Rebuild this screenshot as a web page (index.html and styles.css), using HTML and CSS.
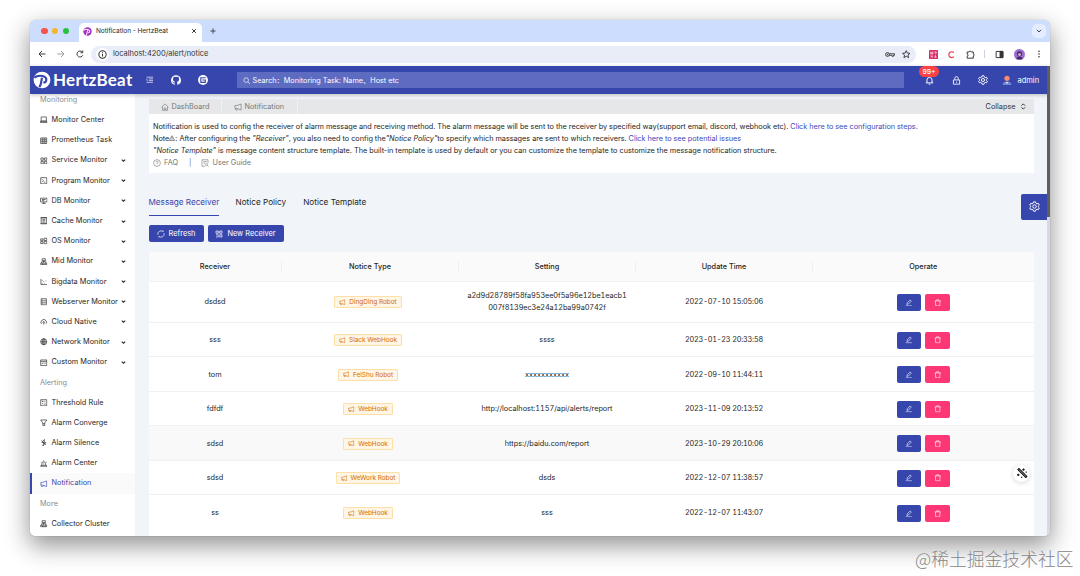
FILE: index.html
```html
<!DOCTYPE html>
<html lang="en">
<head>
<meta charset="utf-8">
<title>Notification - HertzBeat</title>
<link rel="stylesheet" href="styles.css">
</head>
<body>
<svg class="defs" xmlns="http://www.w3.org/2000/svg">
  <symbol id="horn" viewBox="0 0 16 16"><path d="M14.2 2v12L6 10.9H1.8V5.1H6zM3 11v1.2a2 2 0 0 0 4 .2v-1"/></symbol>
  <symbol id="laptop" viewBox="0 0 16 16"><path d="M2.5 2h11v9h-11zM1 14h14V11H1z"/></symbol>
  <symbol id="grid" viewBox="0 0 16 16"><path d="M1.5 2h13v12h-13zM1.5 6h13M1.5 10h13M6 2v12M10.3 2v12"/></symbol>
  <symbol id="apps" viewBox="0 0 16 16"><path d="M2 2h5v5H2zM9.5 2h5v5h-5zM2 9.5h5v5H2zM9.5 9.5h5v5h-5z"/></symbol>
  <symbol id="code" viewBox="0 0 16 16"><path d="M1.5 1.5h13v13h-13zM4.5 5l3 3-3 3M8.5 11h3"/></symbol>
  <symbol id="db" viewBox="0 0 16 16"><path d="M1 2.5h14v8H1zM4 5.3h8M4 7.7h5M8 10.5v3M4 13.7h8"/></symbol>
  <symbol id="cache" viewBox="0 0 16 16"><path d="M2.5 1.5h11v13h-11zM1 1.5h14M1 14.5h14M5 5h6M5 8h6M5 11h6"/></symbol>
  <symbol id="os" viewBox="0 0 16 16"><path d="M1.5 4h5v4h-5zM1.5 10h5v4h-5zM9 2.5h5.5v5H9zM9 9.5h5.5v5H9z"/></symbol>
  <symbol id="cluster" viewBox="0 0 16 16"><path d="M4.5 1.5h7v4h-7zM8 5.5V14M3.5 11V8h9v3M1.5 11h4v3.5h-4zM10.5 11h4v3.5h-4zM4.5 14.5h7"/></symbol>
  <symbol id="chart" viewBox="0 0 16 16"><path d="M2 2v12h13M5 10.5v1.2M7.5 7v1.2M10 10v1.2M12.5 5.5v1.2M5 5v1.2"/></symbol>
  <symbol id="server" viewBox="0 0 16 16"><path d="M2.5 1.5h11v13h-11zM2.5 6h11M2.5 10.3h11M5 3.8h1.2M5 8.2h1.2M5 12.4h1.2"/></symbol>
  <symbol id="cloud" viewBox="0 0 16 16"><path d="M4 12a3 3 0 0 1-.3-5.8 4.5 4.5 0 0 1 8.6 0A3 3 0 0 1 12 12M8 14V7.5M5.5 10 8 7.5l2.5 2.5"/></symbol>
  <symbol id="globe" viewBox="0 0 16 16"><circle cx="8" cy="8" r="6.5"/><path d="M1.5 8h13M8 1.5v13"/><ellipse cx="8" cy="8" rx="3" ry="6.5"/></symbol>
  <symbol id="custom" viewBox="0 0 16 16"><path d="M1.5 2h13v12h-13zM1.5 5h13M5 8v3M8 7.5v2M11 7.5v3"/></symbol>
  <symbol id="calc" viewBox="0 0 16 16"><path d="M1.5 1.5h13v13h-13zM4.5 5h2.5M4.5 10h2.5M9.5 5h2M9.5 9h2M9.5 11.5h2M5.7 3.8v2.5"/></symbol>
  <symbol id="filter" viewBox="0 0 16 16"><path d="M1.5 2h13L10 8.5V14H6V8.5zM6 10h4"/></symbol>
  <symbol id="mute" viewBox="0 0 16 16"><path d="M9.500 1 4 7.500h4L6 15l6.500-7.500H9zM3 3l10 10"/></symbol>
  <symbol id="alert" viewBox="0 0 16 16"><path d="M4 11.5V8a4 4 0 0 1 8 0v3.5M2 11.5h12v3H2zM8 1v2M2 4l1.2 1M14 4l-1.2 1M7 8.5h2"/></symbol>
  <symbol id="down" viewBox="0 0 16 16"><path d="M2.5 5 8 10.5 13.5 5"/></symbol>
  <symbol id="home" viewBox="0 0 16 16"><path d="M1 8.5 8 1.7l7 6.8M3 7.5v7h10v-7M6.5 14.5V10h3v4.5"/></symbol>
  <symbol id="help" viewBox="0 0 16 16"><circle cx="8" cy="8" r="6.8"/><path d="M5.8 6.5a2.2 2.2 0 1 1 2.2 2.3v1M8 11.3v1.2"/></symbol>
  <symbol id="guide" viewBox="0 0 16 16"><path d="M8 14.5H2v-13h12V8M4.5 5h7M4.5 8H8"/><circle cx="11" cy="11" r="2.3"/><path d="m12.7 12.7 2.3 2.3"/></symbol>
  <symbol id="sync" viewBox="0 0 16 16"><path d="M1.800 9.500A6.300 6.300 0 0 1 12 3.200M14.200 6.500A6.300 6.300 0 0 1 4 12.800M12.300 1v2.500M3.700 15v-2.500"/></symbol>
  <symbol id="addapps" viewBox="0 0 16 16"><path d="M2 2h4.5v4.5H2zM9.5 2H14v4.5H9.5zM9.5 9.5H14V14H9.500zM2 9.500h4.500V14H2M6.500 4.200h3"/></symbol>
  <symbol id="pen" viewBox="0 0 16 16"><path d="M1.5 14.5h13M4 11.5l.7-3.300L11 2l2.500 2.500-6.300 6.300z"/></symbol>
  <symbol id="trash" viewBox="0 0 16 16"><path d="M1.5 4h13M5.5 4V1.700h5V4M3 4l.7 10.500h8.600L13 4"/></symbol>
  <symbol id="gear" viewBox="0 0 16 16"><path d="m6.500 1.200-.5 2-1.600.9-2-.6L1 6l1.500 1.400v1.200L1 10l1.400 2.500 2-.6 1.600.9.500 2h3l.5-2 1.600-.9 2 .6L15 10l-1.500-1.400V7.400L15 6l-1.400-2.500-2 .6-1.600-.9-.5-2z"/><circle cx="8" cy="8" r="2.500"/></symbol>
  <symbol id="lock" viewBox="0 0 16 16"><path d="M2.500 7h11v7.500h-11zM5 7V4a3 3 0 0 1 6 0v3M8 10v2"/></symbol>
  <symbol id="bell" viewBox="0 0 16 16"><path d="M3.500 12V7a4.500 4.500 0 0 1 9 0v5M1.500 12.200h13M6.500 14.500h3"/></symbol>
  <symbol id="search" viewBox="0 0 16 16"><circle cx="6.700" cy="6.700" r="5"/><path d="m10.500 10.500 4.500 4.500"/></symbol>
  <symbol id="brand" viewBox="0 0 20 20"><circle cx="10" cy="10" r="9.300" fill="currentColor" stroke="none"/><path class="cut" d="M1.500 7.500C5 4.800 10 5 13 6.500c3 2 2 6.500-1.500 6.200M10 7.500c-1 3 0 6-3 10.500"/></symbol>
</svg>

<div class="window">
  <div class="tabstrip">
    <div class="lights"><i class="red"></i><i class="amber"></i><i class="green"></i></div>
    <div class="tab"><svg class="fav"><use href="#brand"/></svg><span class="tab-title">Notification - HertzBeat</span>
      <svg class="close" viewBox="0 0 16 16"><path d="m3 3 10 10M13 3 3 13"/></svg></div>
    <svg class="plus" viewBox="0 0 16 16"><path d="M8 1v14M1 8h14"/></svg>
    <div class="tabmenu"><svg viewBox="0 0 16 16"><use href="#down"/></svg></div>
  </div>

  <div class="toolbar">
    <svg viewBox="0 0 16 16"><path d="M15 8H2M8 2 2 8l6 6"/></svg>
    <svg class="faded" viewBox="0 0 16 16"><path d="M1 8h13M8 2l6 6-6 6"/></svg>
    <svg viewBox="0 0 16 16"><path d="M13.500 10.500A6 6 0 1 1 12.500 4M13.500 1v4.500H9"/></svg>
    <div class="address">
      <span class="info"><svg viewBox="0 0 16 16"><circle cx="8" cy="8" r="6.500"/><path d="M8 7v4.500M8 4.200v1.500"/></svg></span>
      <span class="url">localhost:4200/alert/notice</span>
      <svg class="key" viewBox="0 0 20 12"><circle cx="5" cy="6" r="3.800"/><circle cx="5" cy="6" r=".8"/><path d="M8.500 4.500H19v3h-2v2h-3v-2H8.500"/></svg>
      <svg class="star" viewBox="0 0 16 16"><path d="m8 1.200 2 4.600 5 .4-3.800 3.300 1.200 4.900L8 11.800l-4.400 2.600 1.200-4.900L1 6.200l5-.4z"/></svg>
    </div>
    <div class="extensions">
      <svg class="translate" viewBox="0 0 16 16"><rect width="16" height="16" rx="1" fill="#dc2f6b" stroke="none"/><path d="M3 4h4v3H3zM9.500 3.500h3.500l-1.500 4M3 10l4 3M7 10l-4 3M9.500 12.500h4M11.500 9v4"/></svg>
      <svg class="letter" viewBox="0 0 16 16"><path d="M13 4.500A5.500 5.500 0 1 0 13 12"/></svg>
      <svg viewBox="0 0 16 16"><path d="M2 3.500h3.500a1.800 1.500 0 0 1 3.600 0H13V7a1.500 1.800 0 0 1 0 3.600v3.900H2V11a1.800 1.800 0 0 0 0-3.600z"/></svg>
      <i class="divider"></i>
      <svg class="panel" viewBox="0 0 16 16"><path d="M2 2.500h12v11H2z"/><path d="M9 2.500h5v11H9z" fill="#333"/></svg>
      <svg class="profile" viewBox="0 0 16 16"><circle cx="8" cy="8" r="8" fill="#a06bcf" stroke="none"/><circle cx="8" cy="7" r="3.800" fill="#49306e" stroke="none"/><circle cx="8" cy="8" r="2" fill="#d8bfe0" stroke="none"/><path d="M4 15v-2.500l4-1.500 4 1.500V15z" fill="#3c2a5c" stroke="none"/></svg>
      <svg class="dots" viewBox="0 0 16 16"><circle cx="8" cy="2.500" r="1.600"/><circle cx="8" cy="8" r="1.600"/><circle cx="8" cy="13.500" r="1.600"/></svg>
    </div>
  </div>

  <div class="app">
    <header class="header">
      <svg class="logo"><use href="#brand"/></svg><span class="brand">HertzBeat</span>
      <svg class="fold" viewBox="0 0 16 16"><path d="M1 2.500h14M6 6.200h9M6 9.800h9M1 13.500h14M3.500 6 1 8l2.500 2"/></svg>
      <svg class="github" viewBox="0 0 16 16"><path fill="#fff" stroke="none" d="M8 .2a8 8 0 0 0-2.600 15.500c.4.100.6-.2.600-.5v-2c-2.500.5-3-.9-3.300-1.500-.2-.4-.6-.9-1-1.200.6-.4 1.300 0 1.700.6.700 1.100 1.600 1.200 2.600.8.100-.5.300-.9.600-1.200-2.300-.4-3.400-1.700-3.400-4 0-1 .3-1.700.8-2.300-.2-.6-.2-1.400.1-2.200.8 0 1.600.4 2.300.9a8 8 0 0 1 3.400 0c.7-.5 1.500-.9 2.300-.9.300.8.300 1.600.1 2.200.5.600.8 1.300.8 2.300 0 2.300-1.200 3.600-3.500 4 .4.400.6 1 .6 1.700v2.800c0 .3.200.6.600.5A8 8 0 0 0 8 .2"/></svg>
      <svg class="gitee" viewBox="0 0 16 16"><circle cx="8" cy="8" r="7.900" fill="#fff" stroke="none"/><path d="M12.300 4.300H4.500v7.400h7.200V8H7"/></svg>
      <div class="searchbox"><svg><use href="#search"/></svg><span>Search：Monitoring Task: Name、Host etc</span></div>
      <div class="bell"><svg><use href="#bell"/></svg><b class="count">99+</b></div>
      <svg class="hicon lock"><use href="#lock"/></svg>
      <svg class="hicon set"><use href="#gear"/></svg>
      <svg class="avatar" viewBox="0 0 16 16"><circle cx="8" cy="4.500" r="4.200" fill="#f58b73"/><path d="M1 15a7 5.500 0 0 1 14 0z" fill="#7286d6"/><path d="M6 10.500h4L8 14z" fill="#e6eaff"/></svg>
      <span class="admin">admin</span>
    </header>

    <div class="body">
      <nav class="sidebar">
        <div class="group">Monitoring</div>
        <div class="item"><svg><use href="#laptop"/></svg><span>Monitor Center</span></div>
        <div class="item"><svg><use href="#grid"/></svg><span>Prometheus Task</span></div>
        <div class="item"><svg><use href="#apps"/></svg><span>Service Monitor</span><svg class="caret"><use href="#down"/></svg></div>
        <div class="item"><svg><use href="#code"/></svg><span class="tight">Program Monitor</span><svg class="caret"><use href="#down"/></svg></div>
        <div class="item"><svg><use href="#db"/></svg><span class="tight">DB Monitor</span><svg class="caret"><use href="#down"/></svg></div>
        <div class="item"><svg><use href="#cache"/></svg><span class="tight">Cache Monitor</span><svg class="caret"><use href="#down"/></svg></div>
        <div class="item"><svg><use href="#os"/></svg><span class="tight">OS Monitor</span><svg class="caret"><use href="#down"/></svg></div>
        <div class="item"><svg><use href="#cluster"/></svg><span class="tight">Mid Monitor</span><svg class="caret"><use href="#down"/></svg></div>
        <div class="item"><svg><use href="#chart"/></svg><span class="tight">Bigdata Monitor</span><svg class="caret"><use href="#down"/></svg></div>
        <div class="item"><svg><use href="#server"/></svg><span class="tight">Webserver Monitor</span><svg class="caret"><use href="#down"/></svg></div>
        <div class="item"><svg><use href="#cloud"/></svg><span>Cloud Native</span><svg class="caret"><use href="#down"/></svg></div>
        <div class="item"><svg><use href="#globe"/></svg><span class="tight">Network Monitor</span><svg class="caret"><use href="#down"/></svg></div>
        <div class="item"><svg><use href="#custom"/></svg><span class="tight">Custom Monitor</span><svg class="caret"><use href="#down"/></svg></div>
        <div class="group">Alerting</div>
        <div class="item"><svg><use href="#calc"/></svg><span class="tight">Threshold Rule</span></div>
        <div class="item"><svg><use href="#filter"/></svg><span class="tight">Alarm Converge</span></div>
        <div class="item"><svg><use href="#mute"/></svg><span class="tight">Alarm Silence</span></div>
        <div class="item"><svg><use href="#alert"/></svg><span class="tight">Alarm Center</span></div>
        <div class="item active"><svg><use href="#horn"/></svg><span class="tight">Notification</span></div>
        <div class="group">More</div>
        <div class="item"><svg><use href="#cluster"/></svg><span class="tight">Collector Cluster</span></div>
      </nav>

      <main class="main">
        <div class="crumbs">
          <div class="crumb first"><svg><use href="#home"/></svg><span>DashBoard</span></div>
          <div class="crumb second"><svg><use href="#horn"/></svg><span>Notification</span></div>
          <div class="collapse"><span>Collapse</span><svg viewBox="0 0 16 16"><path d="m3.500 6 4.500-4.500L12.500 6M3.500 10l4.500 4.500 4.500-4.500"/></svg></div>
        </div>
        <section class="notes">
          <p><span class="n1">Notification is used to config the receiver of alarm message and receiving method. The alarm message will be sent to the receiver by specified way(support email, discord, webhook etc). <a>Click here to see configuration steps.</a></span></p>
          <p><span class="n2">Note<svg class="warn" viewBox="0 0 16 16"><path d="M8 2 15 14.500H1zM8 6.500v4M8 11.500v1.500"/></svg>: After configuring the <em>"Receiver"</em>, you also need to config the<em>"Notice Policy"</em>to specify which massages are sent to which receivers. <a>Click here to see potential issues</a></span></p>
          <p><span class="n3"><em>"Notice Template"</em> is message content structure template. The built-in template is used by default or you can customize the template to customize the message notification structure.</span></p>
          <p class="help"><svg><use href="#help"/></svg><span>FAQ</span><i>|</i><svg><use href="#guide"/></svg><span>User Guide</span></p>
        </section>
        <div class="tabs"><span class="on">Message Receiver</span><span>Notice Policy</span><span>Notice Template</span></div>
        <div class="actions">
          <button class="btn refresh"><svg><use href="#sync"/></svg><span>Refresh</span></button>
          <button class="btn new"><svg><use href="#addapps"/></svg><span>New Receiver</span></button>
        </div>
        <div class="table">
          <div class="row head"><div>Receiver</div><div>Notice Type</div><div>Setting</div><div>Update Time</div><div>Operate</div></div>
          <div class="row tall"><div>dsdsd</div><div><span class="tag"><svg><use href="#horn"/></svg>DingDing Robot</span></div><div class="hash">a2d9d28789f58fa953ee0f5a96e12be1eacb1<br>007f8139ec3e24a12ba99a0742f</div><div class="date">2022-07-10 15:05:06</div><div><i class="op edit"><svg><use href="#pen"/></svg></i><i class="op del"><svg><use href="#trash"/></svg></i></div></div>
          <div class="row"><div>sss</div><div><span class="tag"><svg><use href="#horn"/></svg>Slack WebHook</span></div><div>ssss</div><div class="date">2023-01-23 20:33:58</div><div><i class="op edit"><svg><use href="#pen"/></svg></i><i class="op del"><svg><use href="#trash"/></svg></i></div></div>
          <div class="row"><div>tom</div><div><span class="tag"><svg><use href="#horn"/></svg>FeiShu Robot</span></div><div>xxxxxxxxxxx</div><div class="date">2022-09-10 11:44:11</div><div><i class="op edit"><svg><use href="#pen"/></svg></i><i class="op del"><svg><use href="#trash"/></svg></i></div></div>
          <div class="row"><div>fdfdf</div><div><span class="tag"><svg><use href="#horn"/></svg>WebHook</span></div><div class="link">http://localhost:1157/api/alerts/report</div><div class="date">2023-11-09 20:13:52</div><div><i class="op edit"><svg><use href="#pen"/></svg></i><i class="op del"><svg><use href="#trash"/></svg></i></div></div>
          <div class="row hover"><div>sdsd</div><div><span class="tag"><svg><use href="#horn"/></svg>WebHook</span></div><div>https://baidu.com/report</div><div class="date">2023-10-29 20:10:06</div><div><i class="op edit"><svg><use href="#pen"/></svg></i><i class="op del"><svg><use href="#trash"/></svg></i></div></div>
          <div class="row"><div>sdsd</div><div><span class="tag"><svg><use href="#horn"/></svg>WeWork Robot</span></div><div>dsds</div><div class="date">2022-12-07 11:38:57</div><div><i class="op edit"><svg><use href="#pen"/></svg></i><i class="op del"><svg><use href="#trash"/></svg></i></div></div>
          <div class="row last"><div>ss</div><div><span class="tag"><svg><use href="#horn"/></svg>WebHook</span></div><div>sss</div><div class="date">2022-12-07 11:43:07</div><div><i class="op edit"><svg><use href="#pen"/></svg></i><i class="op del"><svg><use href="#trash"/></svg></i></div></div>
        </div>
      </main>
    </div>
    <div class="drawer"><svg><use href="#gear"/></svg></div>
    <div class="wand"><svg viewBox="0 0 16 16"><path d="M2.500 3.500 13 14l1.500-1.500L4 2z"/><path class="sparks" d="M10 2v3M8.500 3.500h3M13.500 6v1.500M3 9v3M1.500 10.500h3M7.500 13v1.500"/></svg></div>
    <div class="scroll"></div>
  </div>
</div>
<div class="watermark">@稀土掘金技术社区</div>
</body>
</html>
```
FILE: styles.css
```css
* { box-sizing: border-box; }
body { margin: 0; width: 1080px; height: 576px; overflow: hidden; position: relative; background: #fff; font: 7.3px/12px Inter, "Noto Sans CJK SC", sans-serif; color: #262626; }
svg { fill: none; stroke: currentColor; stroke-width: 1.4; flex: none; display: block; }
i { font-style: normal; }
.defs { position: absolute; width: 0; height: 0; }
.window { margin: 20px 30px 0; width: 1020px; height: 516px; border-radius: 6px; overflow: hidden; background: #fff; box-shadow: 0 0 1px rgba(0,0,0,.4), 0 9px 24px 1px rgba(0,0,0,.42); }
.cut { stroke: var(--cut); stroke-width: 2.4; }

.tabstrip { height: 22px; background: #cdddfd; display: flex; align-items: center; padding: 0 4px 0 11px; }
.lights { display: flex; gap: 4.2px; width: 38px; }
.lights i { width: 6.6px; height: 6.6px; border-radius: 50%; }
.red { background: #f5544d; } .amber { background: #f8b52e; } .green { background: #28c03f; }
.tab { align-self: flex-end; height: 19px; width: 123px; background: #fff; border-radius: 5px 5px 0 0; display: flex; align-items: center; padding: 0 5px 3px 4px; font-size: 6.5px; }
.tab-title { letter-spacing: -.03px; }
.fav { width: 9px; height: 9px; color: #a32bc4; --cut: #fff; margin-right: 4px; }
.close { width: 6px; height: 6px; margin-left: auto; stroke-width: 2.4; }
.plus { width: 6px; height: 6px; margin-left: 8px; stroke-width: 2; }
.tabmenu { margin-left: auto; width: 14px; height: 14px; border-radius: 5px; background: #e4edff; display: flex; align-items: center; justify-content: center; }
.tabmenu svg { width: 6px; height: 6px; stroke-width: 2.4; }

.toolbar { height: 24px; display: flex; align-items: center; padding: 0 7px 0 7.5px; gap: 11px; color: #333; background: #fff; }
.toolbar > svg { width: 8px; height: 8px; stroke-width: 1.9; }
.toolbar .faded { color: #999; }
.address { height: 17px; width: 825px; margin-left: -4px; border-radius: 9px; background: #e9edf8; display: flex; align-items: center; padding: 0 8px 0 5px; }
.info { width: 13px; height: 13px; border-radius: 50%; background: #fff; display: flex; align-items: center; justify-content: center; }
.info svg { width: 9px; height: 9px; stroke-width: 1.8; }
.url { margin-left: 4.5px; padding-top: .5px; font-size: 7.45px; }
.key { width: 10px; height: 7px; margin-left: auto; margin-right: 7px; stroke-width: 1.8; }
.star { width: 8.5px; height: 8.5px; stroke-width: 1.7; }
.address .key, .address .star { transform: translateX(3px); }
.extensions { flex: 1; display: flex; align-items: center; justify-content: space-between; padding-left: 2px; }
.extensions svg { width: 9px; height: 9px; stroke-width: 1.7; }
.extensions .translate { color: #fff; stroke-width: 1.2; }
.extensions .letter { color: #e33b4e; stroke-width: 2.2; width: 8.5px; }
.extensions .profile { width: 11px; height: 11px; }
.extensions .dots { fill: #333; stroke: none; width: 8px; height: 8px; }
.divider { width: 1px; height: 8px; background: #ccd3e2; }

.app { position: relative; height: 470px; background: #f1f5f9; }
.header { position: relative; z-index: 2; height: 28px; background: #3746ad; color: #fff; display: flex; align-items: center; padding-left: 3px; box-shadow: 0 1px 4px rgba(0,0,0,.24); }
.logo { width: 18px; height: 18px; --cut: #3746ad; }
.brand { font: 700 17px/20px Lato, sans-serif; margin-left: 2px; width: 80px; letter-spacing: .25px; }
.fold { width: 7.5px; height: 7.5px; margin-left: 12.5px; }
.github { width: 10px; height: 10px; margin-left: 18px; }
.gitee { width: 10px; height: 10px; margin-left: 16.5px; }
.gitee path { stroke: #3746ad; stroke-width: 1.8; }
.searchbox { margin-left: 29px; width: 667px; height: 16px; background: #5d6bc0; display: flex; align-items: center; padding: 1px 0 0 6px; gap: 2.5px; font-size: 7.25px; }
.searchbox svg { width: 7.5px; height: 7.5px; }
.bell { position: relative; margin-left: 21px; width: 10px; }
.bell svg { width: 9px; height: 9px; stroke-width: 1.7; }
.count { position: absolute; left: -5.5px; top: -10px; width: 20px; height: 11px; border-radius: 6px; background: #fb4346; font: 500 6.8px/11px Inter, sans-serif; text-align: center; }
.hicon { width: 9px; height: 9px; margin-left: 17px; stroke-width: 1.5; }
.hicon.set { width: 10px; height: 10px; }
.avatar { width: 10px; height: 11px; margin-left: 14px; stroke: none; }
.admin { margin-left: 6px; padding-top: 1px; font-size: 7.5px; }

.body { display: flex; height: 442px; overflow: hidden; }
.sidebar { width: 105px; background: #fff; margin-top: -5.1px; padding-top: .9px; height: 448px; }
.group, .item { height: 20.2px; display: flex; align-items: center; padding-left: 10px; letter-spacing: .08px; }
.group { color: #8c8c8c; }
.group, .tight { letter-spacing: .02px; }
.item svg { width: 7.5px; height: 7.5px; margin-right: 4px; }
.item .caret { width: 5px; height: 5px; margin: 0 9px 0 auto; stroke-width: 3.5; }
.item.active { color: #3746ad; background: #fafafb; padding-left: 8px; border-left: 2px solid #3746ad; }

.main { width: 885.5px; margin-left: 13.5px; padding-top: 4.5px; }
.crumbs { height: 15.5px; padding-top: 1px; background: #e6e7e9; display: flex; align-items: center; color: #777; }
.crumb { height: 15px; display: flex; align-items: center; border-right: 1px solid #f1f1f2; padding-left: 12px; font-size: 7.3px; }
.crumb svg { width: 8px; height: 8px; margin-right: 3px; stroke-width: 1.3; }
.crumb.first { width: 73px; } .crumb.second { width: 76px; }
.collapse { margin-left: auto; margin-right: 8px; display: flex; align-items: center; color: #333; font-size: 7.3px; gap: 4px; }
.collapse svg { width: 6.5px; height: 7px; stroke-width: 2.3; }
.notes { height: 59px; background: #fff; padding: 7.4px 5px 0 4.5px; }
.notes p { margin: 0; height: 11.75px; line-height: 11.75px; white-space: nowrap; font-size: 7.3px; }
.n1, .n2 { letter-spacing: -.028px; }
.n3 { letter-spacing: -.008px; }
.notes a { color: #3f49ba; }
.warn { display: inline-block; width: 6px; height: 6px; }
.notes .help { display: flex; align-items: center; color: #777; }
.help svg { width: 8px; height: 8px; margin-right: 3px; stroke-width: 1.2; }
.help i { margin: 0 10px 0 11px; }
.tabs { margin-top: 17px; height: 26px; display: flex; gap: 17px; font-size: 8.2px; line-height: 24.5px; }
.tabs span { white-space: nowrap; }
.tabs .on { color: #3746ad; border-bottom: 1px solid #3746ad; width: 70px; letter-spacing: -.03px; }
.actions { margin-top: 9px; display: flex; gap: 4px; height: 17px; }
.btn { border: 0; border-radius: 2px; padding: 0; background: #3746ad; color: #fff; font: 7.4px/12px Inter, sans-serif; display: flex; align-items: center; justify-content: center; gap: 4px; }
.btn svg { width: 8px; height: 8px; }
.refresh { width: 55px; } .new { width: 76px; }

.table { margin-top: 9.5px; background: #fff; height: 300px; }
.row { display: grid; grid-template-columns: 133px 177px 177px 177px 1fr; height: 34.55px; border-bottom: 1px solid #f1f1f1; }
.row > div { display: flex; align-items: center; justify-content: center; white-space: nowrap; padding-top: 1.5px; }
.head { height: 30px; padding-top: 1px; background: #fafafa; font-weight: 500; }
.head > div:not(:last-child) { background: linear-gradient(#eee, #eee) right center / 1px 9px no-repeat; }
.tall { height: 41px; }
.hover { background: #f9f9f9; }
.last { border: 0; }
.row .hash { line-height: 11.8px; text-align: center; font-feature-settings: "tnum"; letter-spacing: -.09px; }
.row .date { font-feature-settings: "tnum"; letter-spacing: -.19px; }
.row .link { font-feature-settings: "tnum"; }
.tag { height: 12px; margin-right: 4px; padding: 0 4px; border: 1px solid #ffdfa8; border-radius: 1px; background: #fff6e5; color: #d46b08; font-size: 6.5px; line-height: 10px; letter-spacing: -.05px; display: flex; align-items: center; gap: 3.5px; }
.tag svg { width: 6.5px; height: 6.5px; }
.op { width: 24.5px; height: 17px; border-radius: 2px; color: #fff; display: flex; align-items: center; justify-content: center; }
.op svg { width: 7.5px; height: 7.5px; stroke-width: 1.3; }
.edit { background: #3746ad; margin-right: 4px; } .del { background: #fd3676; }

.drawer { position: absolute; z-index: 3; left: 991.3px; top: 128px; width: 25.7px; height: 25.5px; border-radius: 2px 0 0 2px; background: #3746ad; color: #fff; display: flex; align-items: center; justify-content: center; }
.drawer svg { width: 11px; height: 11px; }
.wand { position: absolute; left: 983px; top: 398.5px; width: 17px; height: 17px; border-radius: 50%; background: #fff; box-shadow: 0 1px 5px rgba(0,0,0,.16); display: flex; align-items: center; justify-content: center; color: #111; }
.wand svg { width: 12px; height: 12px; stroke-width: 1.5; }
.scroll { position: absolute; z-index: 4; right: 0; top: 0; width: 3px; height: 470px; background: linear-gradient(#5c5d65 151px, #d5d9e1 151px); }
.watermark { position: absolute; right: 6.5px; top: 545px; font: 300 17.8px/27px "Noto Sans CJK SC", sans-serif; color: #858585; text-shadow: 0 0 1px #fff; white-space: nowrap; }
```
